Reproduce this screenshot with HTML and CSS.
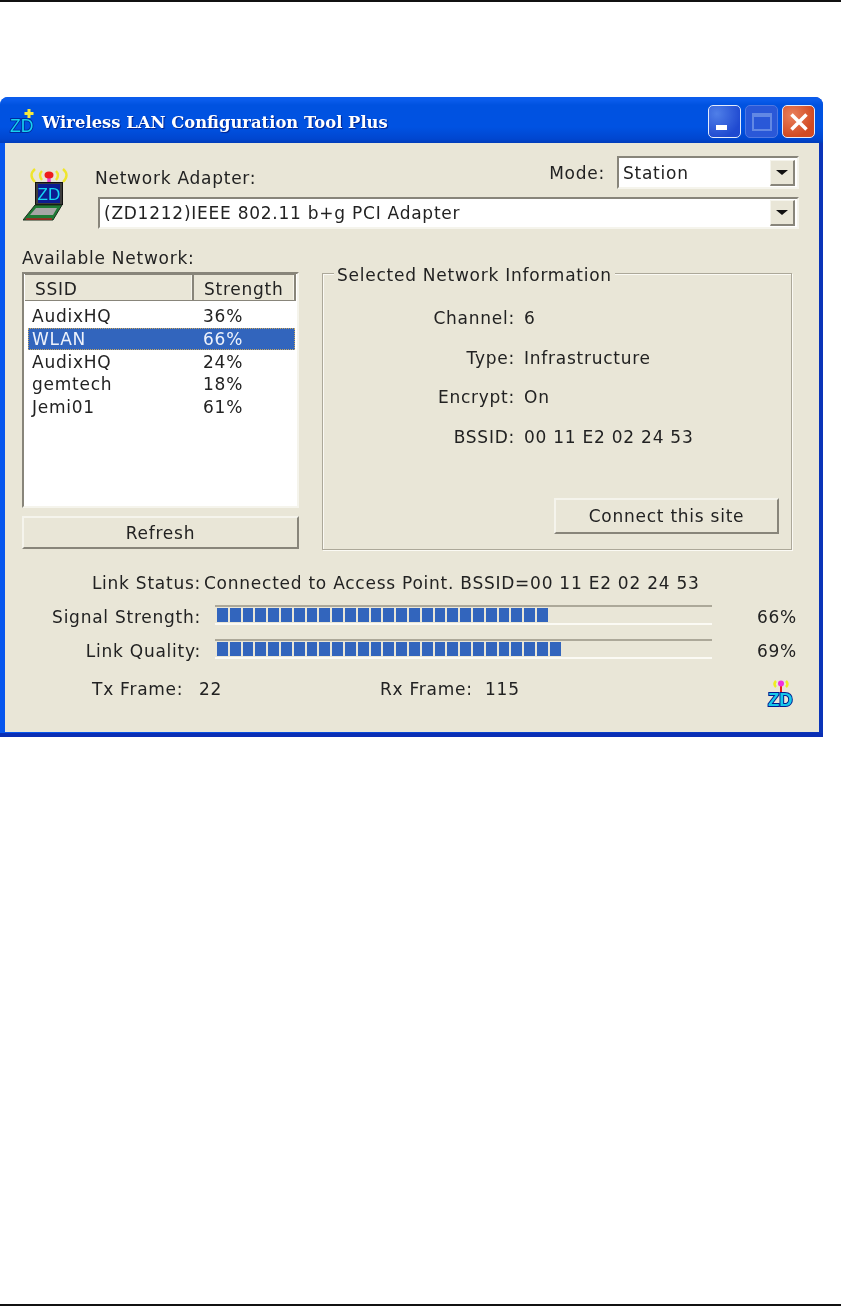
FILE: index.html
```html
<!DOCTYPE html>
<html lang="en">
<head>
  <meta charset="UTF-8">
  <meta name="viewport" content="width=device-width, initial-scale=1.0">
  <title>Wireless LAN Configuration Tool Plus</title>
  <link rel="stylesheet" href="styles.css">
</head>
<body>
  <div class="page">
    <div class="window">

      <!-- Title bar -->
      <div class="titlebar">
        <svg class="title-icon" width="26" height="28" viewBox="0 0 26 28">
          <path d="M20 2v9M15.500 6.500h9" stroke="#f6ea3c" stroke-width="3"/>
          <text x="1" y="25" class="zd-text" font-size="17.500" fill="#16d2f0" stroke="#002a9c" stroke-width="1.800">ZD</text>
        </svg>
        <span class="title-text">Wireless LAN Configuration Tool Plus</span>
        <div class="caption-buttons">
          <div class="cap-btn cap-min"><span class="min-glyph"></span></div>
          <div class="cap-btn cap-max"><span class="max-glyph"></span></div>
          <div class="cap-btn cap-close">
            <svg width="20" height="20" viewBox="0 0 20 20"><path d="M2.500 2.500l15 15M17.500 2.500l-15 15" stroke="#fff" stroke-width="3.500"/></svg>
          </div>
        </div>
      </div>

      <div class="client">

        <!-- Adapter and mode -->
        <div class="top">
          <svg class="adapter-icon" width="46" height="54" viewBox="0 0 46 54">
            <path d="M12 1q-7 6 0 13M19 3q-4 4 0 9M40 1q7 6 0 13M33 3q4 4 0 9" fill="none" stroke="#efe52c" stroke-width="2.400"/>
            <path d="M26 8v7" stroke="#ee44cc" stroke-width="3.500"/>
            <ellipse cx="26" cy="7" rx="4.500" ry="3.500" fill="#ee1c1c"/>
            <rect x="12.500" y="14.500" width="27" height="22" fill="#3c3c3c" stroke="#111"/>
            <rect x="15" y="16" width="22" height="19" fill="#0c1c90"/>
            <text x="14.500" y="32" class="zd-text" font-size="17" fill="#16d6f2">ZD</text>
            <path d="M12 37h27l-9 15H0z" fill="#1e7a35" stroke="#1c2c1c"/>
            <path d="M13 40h21l-4 7H7z" fill="#a6a6a6"/>
            <path d="M3 51h26" stroke="#b02020" stroke-width="1.500"/>
          </svg>
          <div class="top-fields">
            <div class="top-row">
              <span class="adapter-label">Network Adapter:</span>
              <span class="mode-label">Mode:</span>
              <div class="combo combo-mode">
                <span class="combo-text">Station</span>
                <span class="combo-btn"><i class="arrow"></i></span>
              </div>
            </div>
            <div class="combo combo-adapter">
              <span class="combo-text">(ZD1212)IEEE 802.11 b+g PCI Adapter</span>
              <span class="combo-btn"><i class="arrow"></i></span>
            </div>
          </div>
        </div>

        <div class="panels">

          <!-- Network list -->
          <div class="left-panel">
            <div class="list-label">Available Network:</div>
            <div class="list-box">
              <div class="list-head">
                <span class="head-cell head-ssid">SSID</span>
                <span class="head-cell head-strength">Strength</span>
              </div>
              <div class="list-rows">
                <div class="list-row"><span class="cell-ssid">AudixHQ</span><span>36%</span></div>
                <div class="list-row selected"><span class="cell-ssid">WLAN</span><span>66%</span></div>
                <div class="list-row"><span class="cell-ssid">AudixHQ</span><span>24%</span></div>
                <div class="list-row"><span class="cell-ssid">gemtech</span><span>18%</span></div>
                <div class="list-row"><span class="cell-ssid">Jemi01</span><span>61%</span></div>
              </div>
            </div>
            <button class="btn btn-refresh" type="button">Refresh</button>
          </div>

          <!-- Selected network -->
          <div class="group">
            <span class="group-title">Selected Network Information</span>
            <dl class="info">
              <dt>Channel:</dt><dd>6</dd>
              <dt>Type:</dt><dd>Infrastructure</dd>
              <dt>Encrypt:</dt><dd>On</dd>
              <dt>BSSID:</dt><dd>00 11 E2 02 24 53</dd>
            </dl>
            <button class="btn btn-connect" type="button">Connect this site</button>
          </div>
        </div>

        <!-- Link status -->
        <div class="status">
          <div class="status-row status-link">
            <span class="status-label">Link Status:</span>
            <span class="status-value">Connected to Access Point. BSSID=00 11 E2 02 24 53</span>
          </div>
          <div class="status-row status-signal">
            <span class="status-label">Signal Strength:</span>
            <div class="meter"><div class="meter-fill" style="width: 333px"></div></div>
            <span class="meter-pct">66%</span>
          </div>
          <div class="status-row status-quality">
            <span class="status-label">Link Quality:</span>
            <div class="meter"><div class="meter-fill" style="width: 346px"></div></div>
            <span class="meter-pct">69%</span>
          </div>
          <div class="frames">
            <span class="tx-label">Tx Frame:</span>
            <span class="tx-value">22</span>
            <span class="rx-label">Rx Frame:</span>
            <span class="rx-value">115</span>
            <svg class="zd-logo" width="28" height="30" viewBox="0 0 28 30">
              <path d="M9 2q-3 3 0 6M19 2q3 3 0 6" fill="none" stroke="#eeee20" stroke-width="2.500"/>
              <path d="M14 6v8" stroke="#ee1c1c" stroke-width="2"/>
              <circle cx="14" cy="4.500" r="3" fill="#f030e0"/>
              <text x="1" y="27" class="zd-text zd-bold" font-size="18.500" fill="#16c8ea" stroke="#001c90" stroke-width="2">ZD</text>
            </svg>
          </div>
        </div>
      </div>
    </div>
  </div>
</body>
</html>
```

FILE: styles.css
```css
html, body {
  margin: 0;
  padding: 0;
  background: white;
}

.page {
  box-sizing: border-box;
  height: 1307px;
  border-top: 2px solid #111;
  padding-top: 95px;
  position: relative;
  font-family: 'DejaVu Sans', sans-serif;
  font-size: 17px;
  letter-spacing: 0.75px;
  line-height: 20px;
  color: #222;
}

/* bottom rule of the manual page */
.page::after {
  content: '';
  position: absolute;
  left: 0;
  right: 0;
  bottom: 1px;
  height: 2px;
  background: #111;
}

.window {
  width: 823px;
  height: 640px;
  background:
    linear-gradient(to top, #0a2eb4 4px, transparent 4px),
    linear-gradient(90deg, #0656ee, #0a34b8);
  border-radius: 8px 8px 0 0;
  filter: blur(0.35px);
}

/* Title bar */
.titlebar {
  height: 46px;
  display: flex;
  align-items: center;
  padding-left: 9px;
  border-radius: 8px 8px 0 0;
  background: linear-gradient(#0a5cec 0, #0a5cec 3px, #0052e0 8px, #0052e2 30px, #0046d0 42px, #003cba 46px);
}

.title-icon {
  flex: none;
  margin-top: 2px;
}

.zd-text {
  font-family: 'Liberation Sans', sans-serif;
  letter-spacing: 0;
  paint-order: stroke;
}

.zd-bold {
  font-weight: bold;
}

.title-text {
  margin-left: 7px;
  margin-top: 6px;
  font-family: 'DejaVu Serif', serif;
  font-weight: bold;
  font-size: 16.400px;
  letter-spacing: 0;
  color: white;
  text-shadow: 1px 1px 1px #00208a;
}

.caption-buttons {
  margin-left: auto;
  margin-right: 8px;
  margin-top: 3px;
  display: flex;
  gap: 4px;
}

.cap-btn {
  box-sizing: border-box;
  width: 33px;
  height: 33px;
  border-radius: 5px;
  border: 1px solid #e4ebfb;
  display: flex;
  align-items: center;
  justify-content: center;
}

.cap-min {
  position: relative;
  background: radial-gradient(circle at 25% 25%, #4f7fe8, #1f49d0 75%);
}

.min-glyph {
  position: absolute;
  left: 7px;
  bottom: 7px;
  width: 11px;
  height: 5px;
  background: white;
}

.cap-max {
  border-color: #4f78e2;
  background: #2a58d8;
}

.max-glyph {
  box-sizing: border-box;
  width: 20px;
  height: 18px;
  border: 2px solid #6288e4;
  border-top-width: 4px;
}

.cap-close {
  background: radial-gradient(circle at 30% 30%, #e9805c, #d24a22 70%);
}

/* Client area */
.client {
  box-sizing: border-box;
  margin: 0 4px 0 5px;
  height: 589px;
  padding: 13px 20px 0 17px;
  background: #e9e6d7;
}

.top {
  display: flex;
  height: 73px;
}

.adapter-icon {
  flex: none;
  margin-top: 12px;
  margin-left: 1px;
}

.top-fields {
  flex: 1;
  margin-left: 26px;
  display: flex;
  flex-direction: column;
  gap: 8px;
}

.top-row {
  display: flex;
  align-items: center;
  height: 33px;
}

.adapter-label {
  margin-top: 11px;
}

.mode-label {
  margin-left: auto;
  margin-right: 12px;
  margin-top: 1px;
}

/* Combo boxes */
.combo {
  box-sizing: border-box;
  display: flex;
  align-items: center;
  background: white;
  border: 2px solid;
  border-color: #88857a #f5f4ec #f5f4ec #88857a;
  padding: 0 2px 0 4px;
}

.combo-mode {
  width: 182px;
  height: 33px;
}

.combo-adapter {
  margin-left: 3px;
  height: 32px;
}

.combo-text {
  flex: 1;
}

.combo-btn {
  box-sizing: border-box;
  width: 25px;
  height: 26px;
  display: flex;
  align-items: center;
  justify-content: center;
  background: #e9e6d7;
  border-right: 2px solid #88857a;
  border-bottom: 2px solid #88857a;
  border-top: 1px solid #f5f4ec;
  border-left: 1px solid #f5f4ec;
}

.arrow {
  width: 0;
  height: 0;
  border-style: solid;
  border-width: 5px 6px 0;
  border-color: #111 transparent transparent;
}

/* Panels */
.panels {
  display: flex;
  margin-top: 19px;
}

.left-panel {
  width: 277px;
  flex: none;
}

.list-label {
  margin-bottom: 4px;
}

.list-box {
  box-sizing: border-box;
  height: 236px;
  background: white;
  border: 2px solid;
  border-color: #88857a #f5f4ec #f5f4ec #88857a;
  padding: 0 1px 0 1px;
}

.list-head {
  display: flex;
  height: 27px;
  background: #e9e6d7;
  border-bottom: 1px solid #88857a;
  box-sizing: border-box;
}

.head-cell {
  box-sizing: border-box;
  display: flex;
  align-items: center;
  padding-top: 2px;
  border-right: 2px solid #88857a;
  border-top: 1px solid #88857a;
  box-shadow: inset -1px 0 0 #f5f4ec;
}

.head-ssid {
  width: 169px;
  padding-left: 10px;
}

.head-strength {
  flex: 1;
  padding-left: 10px;
}

.list-rows {
  padding-top: 4px;
}

.list-row {
  box-sizing: border-box;
  display: flex;
  height: 22.700px;
  align-items: center;
  margin-left: 3px;
  margin-right: 1px;
  line-height: 22px;
}

.cell-ssid {
  width: 172px;
  margin-left: 4px;
  margin-right: -1px;
}

.list-row.selected {
  background: #3265bd;
  color: #eef2fb;
  outline: 1px dotted #c9a860;
  outline-offset: -1px;
}

.btn {
  box-sizing: border-box;
  display: block;
  font: inherit;
  letter-spacing: inherit;
  color: inherit;
  background: #e9e6d7;
  border: 2px solid;
  border-color: #f5f4ec #88857a #88857a #f5f4ec;
  padding: 0;
}

.btn-refresh {
  width: 277px;
  height: 33px;
  margin-top: 8px;
}

/* Selected network group */
.group {
  box-sizing: border-box;
  position: relative;
  width: 470px;
  height: 277px;
  margin-left: 23px;
  margin-top: 25px;
  border: 1px solid #aca899;
  box-shadow: 1px 1px 0 #fbfaf4, inset 1px 1px 0 #fbfaf4;
}

.group-title {
  position: absolute;
  left: 11px;
  top: -9px;
  padding: 0 3px;
  background: #e9e6d7;
}

.info {
  display: grid;
  grid-template-columns: 192px 1fr;
  column-gap: 9px;
  row-gap: 19.500px;
  margin: 34px 0 0;
}

.info dt {
  text-align: right;
}

.info dd {
  margin: 0;
}

.btn-connect {
  position: absolute;
  right: 12px;
  bottom: 15px;
  width: 225px;
  height: 36px;
}

/* Status block */
.status {
  margin-top: 23px;
}

.status-row {
  display: flex;
  align-items: flex-start;
}

.status-label {
  flex: none;
  width: 179px;
  text-align: right;
}

.status-value {
  margin-left: 3px;
}

.status-signal {
  margin-top: 12px;
}

.status-quality {
  margin-top: 12px;
}

.status-signal .status-label,
.status-quality .status-label,
.meter-pct {
  margin-top: 2px;
}

.meter {
  box-sizing: border-box;
  width: 497px;
  height: 20px;
  margin-left: 14px;
  border-top: 2px solid #aca899;
  border-bottom: 2px solid #fbfaf4;
  padding: 1px 0 1px 2px;
}

.meter-fill {
  height: 100%;
  background: repeating-linear-gradient(90deg, #3265bd 0, #3265bd 10.800px, transparent 10.800px, transparent 12.800px);
}

.meter-pct {
  margin-left: auto;
  margin-right: 2px;
}

.frames {
  display: flex;
  margin-top: 18px;
  padding-left: 70px;
}

.tx-label {
  flex: none;
  width: 107px;
}

.tx-value {
  flex: none;
  width: 181px;
}

.rx-label {
  flex: none;
  width: 105px;
}

.zd-logo {
  margin-left: auto;
  margin-right: 4px;
  flex: none;
}
```
